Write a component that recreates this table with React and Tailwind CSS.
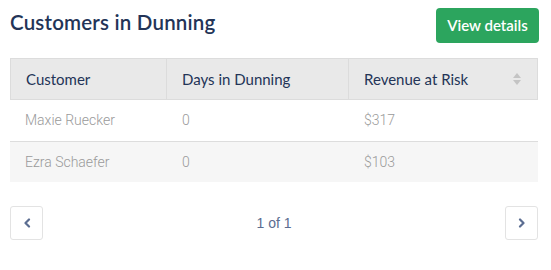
import React from 'react';

const rows = [
  { name: 'Maxie Ruecker', days: 0, revenue: '$317' },
  { name: 'Ezra Schaefer', days: 0, revenue: '$103' },
];

const SortIcon = () => (
  <svg width="8" height="12" viewBox="0 0 8 12" className="text-[#c4c4c4]">
    <path d="M4 0 L8 5 H0 Z" fill="currentColor" />
    <path d="M4 12 L8 7 H0 Z" fill="currentColor" />
  </svg>
);

const Chevron = ({ dir }) => (
  <svg width="8" height="10" viewBox="0 0 8 10">
    <path
      d={dir === 'left' ? 'M6 1.5 L2.5 5 L6 8.5' : 'M2 1.5 L5.5 5 L2 8.5'}
      fill="none"
      stroke="#5b6d91"
      strokeWidth="2.2"
      strokeLinecap="round"
      strokeLinejoin="round"
    />
  </svg>
);

export default function App() {
  return (
    <div className="w-[551px] h-[270px] bg-white px-[10px] pt-[8px] font-['Lato',sans-serif]">
      <div className="w-[529px] flex items-center justify-between">
        <h2 className="pb-[6px] text-[20.5px] font-semibold text-[#233457] leading-none tracking-[0.2px]">
          Customers in Dunning
        </h2>
        <button className="h-[35px] w-[103px] rounded-[4px] bg-[#2ca55e] text-white text-[15px] font-semibold">
          View details
        </button>
      </div>

      <div className="mt-[15px] w-[528px]">
        <div className="flex h-[42px] bg-[#e9e9e9] border border-[#dcdcdc] text-[15px] text-[#233457]">
          <div className="w-[156px] flex items-center pl-[15px] border-r border-[#dcdcdc]">Customer</div>
          <div className="w-[182px] flex items-center pl-[15px] border-r border-[#dcdcdc]">Days in Dunning</div>
          <div className="flex-1 flex items-center justify-between pl-[15px] pr-[16px]">
            <span>Revenue at Risk</span>
            <SortIcon />
          </div>
        </div>
        {rows.map((row, i) => (
          <div
            key={i}
            className={`flex h-[41px] items-center text-[14px] text-[#9a9a9a] font-['Roboto',sans-serif] font-light ${
              i % 2 === 1 ? 'bg-[#f6f6f6] border-t border-[#dddddd]' : 'bg-white'
            }`}
          >
            <div className="w-[156px] pl-[15px]">{row.name}</div>
            <div className="w-[182px] pl-[16px]">{row.days}</div>
            <div className="flex-1 pl-[16px]">{row.revenue}</div>
          </div>
        ))}
      </div>

      <div className="mt-[24px] w-[528px] flex items-center justify-between">
        <button className="w-[33px] h-[34px] rounded-[3px] border border-[#e3e3e3] flex items-center justify-center">
          <Chevron dir="left" />
        </button>
        <span className="text-[14px] text-[#5b6d91] font-['Liberation_Sans',sans-serif]">1 of 1</span>
        <button className="w-[33px] h-[34px] rounded-[3px] border border-[#e3e3e3] flex items-center justify-center">
          <Chevron dir="right" />
        </button>
      </div>
    </div>
  );
}
